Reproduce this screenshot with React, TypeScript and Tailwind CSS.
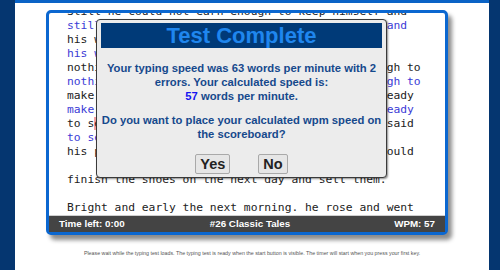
import React from "react";

type Line = { text: string; typed?: boolean; errAt?: number };

const lines: Line[] = [
  { text: "Still he could not earn enough to keep himself and" },
  { text: "still he could not earn enough to keep himself and", typed: true },
  { text: "his wife, and at last he had" },
  { text: "his wife, and at last he had", typed: true },
  { text: "nothing left in the world but just leather enough to" },
  { text: "nothing left in the world but just leather enough to", typed: true },
  { text: "make one more pair of shoes. He cut them out, ready" },
  { text: "make one more pair of shoes. He cut them out, ready", typed: true },
  { text: "to sew in the morning and went to bed. Then he said", errAt: 4 },
  { text: "to sew in the morning", typed: true },
  { text: "his prayers, and hoped that in the morning he could" },
  { text: "", typed: true },
  { text: "finish the shoes on the next day and sell them." },
  { text: "", typed: true },
  { text: "Bright and early the next morning. he rose and went" },
  { text: "", typed: true },
];

function TextLine({ line }: { line: Line }) {
  const color = line.typed ? "text-[#3b3bd6]" : "text-[#222]";
  if (line.errAt === undefined) {
    return <div className={`h-[14px] leading-[14px] whitespace-pre ${color}`}>{line.text || " "}</div>;
  }
  const i = line.errAt;
  return (
    <div className={`h-[14px] leading-[14px] whitespace-pre ${color}`}>
      {line.text.slice(0, i)}
      <span className="bg-[#f7a0a0]">{line.text[i]}</span>
      {line.text.slice(i + 1)}
    </div>
  );
}

export default function App() {
  return (
    <div className="flex h-[270px] w-[500px] bg-white font-['Liberation_Sans',Arial,sans-serif]">
      <div className="w-[15px] bg-[#053670]" />
      <main className="flex-1 flex flex-col">
        <div className="h-[3px] bg-[#0a63c6]" />

        <div className="relative ml-[31px] mt-[7px] w-[402px] h-[225px] border-[3px] border-[#0b67d0] rounded-[5px] bg-white shadow-[4px_5px_4px_rgba(0,0,0,0.45)] flex flex-col">
          <div className="h-[203px] overflow-hidden pl-[18px] border-b border-[#cfcfcf] font-['DejaVu_Sans_Mono',monospace] text-[11.3px]">
            <div className="-mt-[8px]">
              {lines.map((l, i) => (
                <TextLine key={i} line={l} />
              ))}
            </div>
          </div>
          <div className="h-[16px] bg-[#444444] grid grid-cols-[1fr_auto_1fr] items-center px-[10px] text-white font-bold text-[9.8px]">
            <span>Time left: 0:00</span>
            <span className="ml-[6px]">#26 Classic Tales</span>
            <span className="text-right">WPM: 57</span>
          </div>

          {/* result dialog */}
          <div className="absolute left-[47px] top-[6px] w-[291px] h-[159px] border border-[#3a3a3a] rounded-[4px] bg-[#ececec] px-[4px] pt-[3px] shadow-[1px_1px_2px_rgba(0,0,0,0.45)] flex flex-col">
            <div className="h-[25px] bg-[#003a78] text-center text-[22px] leading-[25px] font-bold text-[#1f86ee]">
              Test Complete
            </div>
            <div className="mt-[13px] text-center text-[11.25px] leading-[14px] font-bold text-[#16498c] whitespace-nowrap">
              <p>
                Your typing speed was 63 words per minute with 2
                <br />
                errors. Your calculated speed is:
                <br />
                <span className="text-[#1414f0]">57</span> words per minute.
              </p>
              <p className="mt-[10px]">
                Do you want to place your calculated wpm speed on
                <br />
                the scoreboard?
              </p>
            </div>
            <div className="mt-[13px] flex justify-center gap-[28px]">
              <button className="h-[20px] px-[4px] border border-[#a9a9a9] rounded-[2px] bg-[#e6e6e6] text-[14.5px] leading-[18px] font-bold text-[#222]">
                Yes
              </button>
              <button className="h-[20px] px-[4px] border border-[#a9a9a9] rounded-[2px] bg-[#e6e6e6] text-[14.5px] leading-[18px] font-bold text-[#222]">
                No
              </button>
            </div>
          </div>
        </div>

        <p className="mt-[15px] text-center text-[5.3px] leading-[6px] text-[#555]">
          Please wait while the typing test loads. The typing test is ready when the start button is visible. The timer will start when you press your first key.
        </p>
      </main>
      <div className="w-[11px] bg-[#053670]" />
    </div>
  );
}
